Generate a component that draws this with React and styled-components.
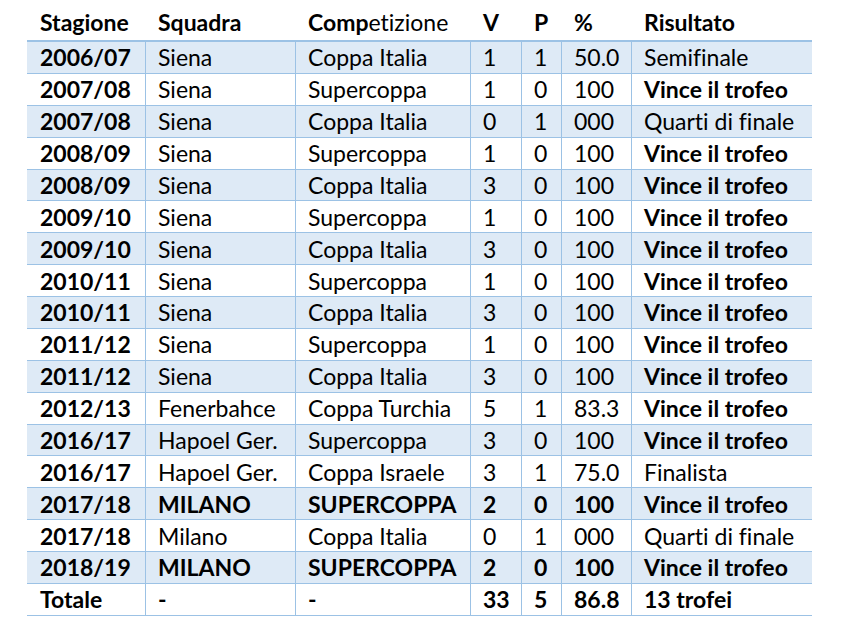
import React from "react";
import styled, { createGlobalStyle } from "styled-components";

const Global = createGlobalStyle`
  html, body { margin: 0; padding: 0; background: #ffffff; }
  body {
    font-family: Lato, "Noto Sans", sans-serif;
    color: #000;
    font-variant-ligatures: none;
  }
`;

const Page = styled.div`
  padding: 4px 0 0 27px;
`;

const Table = styled.div`
  width: 785px;
  display: flex;
  flex-direction: column;
`;

const cols = "118px 150px 175px 51px 40px 70px 181px";

const HeaderRow = styled.div`
  display: grid;
  grid-template-columns: ${cols};
  height: 36px;
  border-bottom: 2px solid #9cc2e5;
`;

const HeaderCell = styled.div`
  display: flex;
  align-items: center;
  padding-left: 13px;
  font-size: 23px;
  font-weight: 700;
  white-space: nowrap;
`;

const Light = styled.span`
  font-weight: 400;
`;

const Row = styled.div`
  display: grid;
  grid-template-columns: ${cols};
  height: 31.875px;
  box-sizing: border-box;
  border-bottom: 1px solid #9cc2e5;
  background: ${(p) => (p.$shaded ? "#deeaf6" : "#ffffff")};
`;

const Cell = styled.div`
  display: flex;
  align-items: center;
  padding-left: ${(p) => (p.$first ? "13px" : "12px")};
  border-left: ${(p) => (p.$first ? "none" : "1px solid #9cc2e5")};
  font-size: 23px;
  font-weight: ${(p) => (p.$bold ? 700 : 400)};
  white-space: nowrap;
  overflow: hidden;
`;

const W = "Vince il trofeo";

const data = [
  ["2006/07", "Siena", "Coppa Italia", "1", "1", "50.0", "Semifinale"],
  ["2007/08", "Siena", "Supercoppa", "1", "0", "100", W],
  ["2007/08", "Siena", "Coppa Italia", "0", "1", "000", "Quarti di finale"],
  ["2008/09", "Siena", "Supercoppa", "1", "0", "100", W],
  ["2008/09", "Siena", "Coppa Italia", "3", "0", "100", W],
  ["2009/10", "Siena", "Supercoppa", "1", "0", "100", W],
  ["2009/10", "Siena", "Coppa Italia", "3", "0", "100", W],
  ["2010/11", "Siena", "Supercoppa", "1", "0", "100", W],
  ["2010/11", "Siena", "Coppa Italia", "3", "0", "100", W],
  ["2011/12", "Siena", "Supercoppa", "1", "0", "100", W],
  ["2011/12", "Siena", "Coppa Italia", "3", "0", "100", W],
  ["2012/13", "Fenerbahce", "Coppa Turchia", "5", "1", "83.3", W],
  ["2016/17", "Hapoel Ger.", "Supercoppa", "3", "0", "100", W],
  ["2016/17", "Hapoel Ger.", "Coppa Israele", "3", "1", "75.0", "Finalista"],
  ["2017/18", "MILANO", "SUPERCOPPA", "2", "0", "100", W, true],
  ["2017/18", "Milano", "Coppa Italia", "0", "1", "000", "Quarti di finale"],
  ["2018/19", "MILANO", "SUPERCOPPA", "2", "0", "100", W, true],
  ["Totale", "-", "-", "33", "5", "86.8", "13 trofei", true],
];

export default function App() {
  return (
    <>
      <Global />
      <Page>
        <Table>
          <HeaderRow>
            <HeaderCell>Stagione</HeaderCell>
            <HeaderCell>Squadra</HeaderCell>
            <HeaderCell>
              Comp<Light>etizione</Light>
            </HeaderCell>
            <HeaderCell>V</HeaderCell>
            <HeaderCell>P</HeaderCell>
            <HeaderCell>%</HeaderCell>
            <HeaderCell>Risultato</HeaderCell>
          </HeaderRow>
          {data.map((r, i) => {
            const allBold = r[7] === true;
            return (
              <Row key={i} $shaded={i % 2 === 0}>
                {r.slice(0, 7).map((v, j) => (
                  <Cell
                    key={j}
                    $first={j === 0}
                    $bold={allBold || j === 0 || (j === 6 && v === W)}
                  >
                    {v}
                  </Cell>
                ))}
              </Row>
            );
          })}
        </Table>
      </Page>
    </>
  );
}
